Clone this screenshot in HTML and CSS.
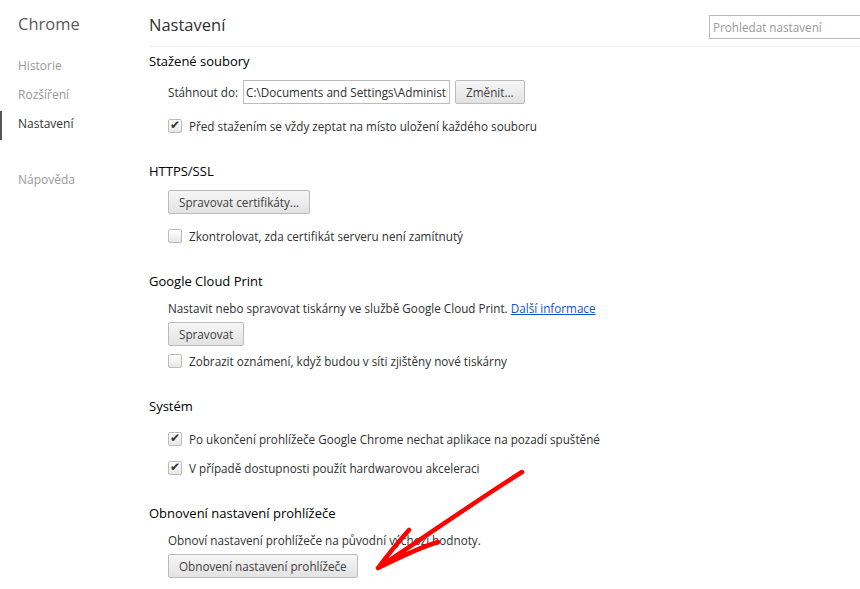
FILE: index.html
```html
<!DOCTYPE html>
<html lang="cs">
<head>
  <meta charset="UTF-8">
  <title>Nastavení</title>
  <link rel="stylesheet" href="styles.css">
</head>
<body>
  <div class="page">
    <div class="sidebar">
      <h1>Chrome</h1>
      <ul class="nav">
        <li>Historie</li>
        <li>Rozšíření</li>
        <li class="active">Nastavení</li>
        <li class="help">Nápověda</li>
      </ul>
    </div>
    <div class="main">
      <div class="header">
        <h1>Nastavení</h1>
        <input class="search" type="text" placeholder="Prohledat nastavení">
      </div>

      <div class="section first">
        <h3>Stažené soubory</h3>
        <div class="row">
          <span>Stáhnout do:</span>
          <input class="path" type="text" value="C:\Documents and Settings\Administrator\Plocha">
          <button>Změnit...</button>
        </div>
        <label class="check gap-l"><span class="box checked"></span>Před stažením se vždy zeptat na místo uložení každého souboru</label>
      </div>

      <div class="section">
        <h3>HTTPS/SSL</h3>
        <div class="row"><button>Spravovat certifikáty...</button></div>
        <label class="check gap-l"><span class="box"></span>Zkontrolovat, zda certifikát serveru není zamítnutý</label>
      </div>

      <div class="section">
        <h3>Google Cloud Print</h3>
        <p>Nastavit nebo spravovat tiskárny ve službě Google Cloud Print. <a href="#">Další informace</a></p>
        <div class="row"><button>Spravovat</button></div>
        <label class="check"><span class="box"></span>Zobrazit oznámení, když budou v síti zjištěny nové tiskárny</label>
      </div>

      <div class="section">
        <h3>Systém</h3>
        <label class="check"><span class="box checked"></span>Po ukončení prohlížeče Google Chrome nechat aplikace na pozadí spuštěné</label>
        <label class="check"><span class="box checked"></span>V případě dostupnosti použít hardwarovou akceleraci</label>
      </div>

      <div class="section">
        <h3>Obnovení nastavení prohlížeče</h3>
        <p>Obnoví nastavení prohlížeče na původní výchozí hodnoty.</p>
        <div class="row"><button>Obnovení nastavení prohlížeče</button></div>
      </div>
    </div>
  </div>

  <svg class="arrow" width="860" height="589" viewBox="0 0 860 589">
    <path d="M522 472 C470 505 420 540 378 568 M378 568 C390 552 400 540 409 530 M378 568 C398 558 418 548 438 542" fill="none" stroke="#f00" stroke-width="4.5" stroke-linecap="round"/>
  </svg>
</body>
</html>
```

FILE: styles.css
```css
body {
  margin: 0;
  font-family: "Open Sans", "Noto Sans", sans-serif;
  font-size: 11.7px;
  color: #303030;
  background: #fff;
  overflow: hidden;
}

.page {
  display: flex;
}

.sidebar {
  width: 149px;
  flex-shrink: 0;
}

.sidebar h1 {
  margin: 12px 0 0 18px;
  font-size: 16.5px;
  font-weight: normal;
  color: #5a5a5a;
  height: 30px;
}

.nav {
  list-style: none;
  margin: 11px 0 0;
  padding: 0;
}

.nav li {
  height: 29px;
  line-height: 26px;
  padding-left: 18px;
  font-size: 12px;
  color: #999;
}

.nav li.active {
  color: #333;
  border-left: 2px solid #555;
  padding-left: 16px;
}

.nav li.help {
  margin-top: 27px;
}

.main {
  flex: 1;
}

.header {
  display: flex;
  justify-content: space-between;
  height: 46px;
  border-bottom: 1px solid #eee;
}

.header h1 {
  margin: 0;
  padding-top: 13px;
  font-size: 16.5px;
  font-weight: normal;
  color: #303030;
}

.search {
  width: 151px;
  height: 24px;
  margin-top: 15px;
  box-sizing: border-box;
  border: 1px solid #bbb;
  border-right: none;
  padding: 0 3px;
  font-family: inherit;
  font-size: 11.7px;
}

.search::placeholder {
  color: #999;
}

.section {
  margin-bottom: 25px;
}

.section.first {
  margin-top: 4px;
}

.section h3 {
  margin: 0;
  height: 20px;
  line-height: 20px;
  font-size: 13px;
  font-weight: normal;
  color: #000;
}

.row {
  display: flex;
  align-items: center;
  gap: 5px;
  padding-left: 19px;
  height: 26px;
}

.section h3 + .row {
  margin-top: 8px;
}

.section p + .row {
  margin-top: 3px;
}

.path {
  width: 207px;
  height: 24px;
  box-sizing: border-box;
  border: 1px solid #bbb;
  padding: 0 2px;
  font-family: inherit;
  font-size: 11.7px;
  color: #303030;
}

button {
  height: 24px;
  padding: 0 10px;
  border: 1px solid #bbb;
  border-radius: 2px;
  background: linear-gradient(#f6f6f6, #e2e2e2);
  font-family: inherit;
  font-size: 11.7px;
  color: #404040;
}

.check {
  display: flex;
  align-items: center;
  height: 20px;
  padding-left: 19px;
  margin-top: 4px;
}

.check.gap-l {
  margin-top: 11px;
}

.section h3 + .check {
  margin-top: 13px;
}

.check + .check {
  margin-top: 9px;
}

.box {
  width: 12px;
  height: 12px;
  border: 1px solid #bbb;
  border-radius: 2px;
  background: linear-gradient(#fff, #e6e6e6);
  margin-right: 7px;
  position: relative;
}

.box.checked::after {
  content: "\2714";
  position: absolute;
  left: 1px;
  top: -4px;
  font-size: 12px;
  color: #333;
}

.section p {
  margin: 7px 0 0;
  padding-left: 19px;
  height: 20px;
  line-height: 20px;
}

a {
  color: #1155cc;
}

.arrow {
  position: absolute;
  left: 0;
  top: 0;
  pointer-events: none;
}
```
